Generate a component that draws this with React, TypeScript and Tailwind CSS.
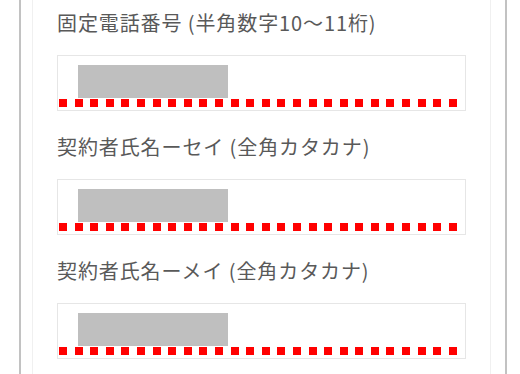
import React from "react";

const labels = [
  "固定電話番号 (半角数字10～11桁)",
  "契約者氏名ーセイ (全角カタカナ)",
  "契約者氏名ーメイ (全角カタカナ)",
];

function Field({ label, first }: { label: string; first: boolean }) {
  return (
    <div className={first ? "" : "mt-[24px]"}>
      <div className="text-[20px] leading-[24px] tracking-[0.9px] text-[#595959] whitespace-nowrap">{label}</div>
      <div className="relative mt-[20px] h-[56px] w-[409px] border border-[#e6e6e6] bg-white">
        <div className="ml-[20px] mt-[9px] h-[33px] w-[150px] bg-[#bfbfbf]" />
        <div className="absolute left-[1px] bottom-[3px] flex gap-[7.6px]">
          {Array.from({ length: 26 }).map((_, i) => (
            <div key={i} className="h-[8px] w-[8px] bg-[#ff0000]" />
          ))}
        </div>
      </div>
    </div>
  );
}

export default function App() {
  return (
    <div
      className="w-[520px] h-[374px] overflow-hidden bg-white pl-[19px]"
      style={{ fontFamily: '"Noto Sans CJK JP", "Noto Sans", sans-serif' }}
    >
      <div className="w-[488px] h-full border-x-2 border-[#c2c2c2] pl-[11px] pr-[14px]">
        <div className="h-full border-x border-[#f0f0f0] pl-[24px] pt-[11px]">
          {labels.map((l, i) => (
            <Field key={i} label={l} first={i === 0} />
          ))}
        </div>
      </div>
    </div>
  );
}
